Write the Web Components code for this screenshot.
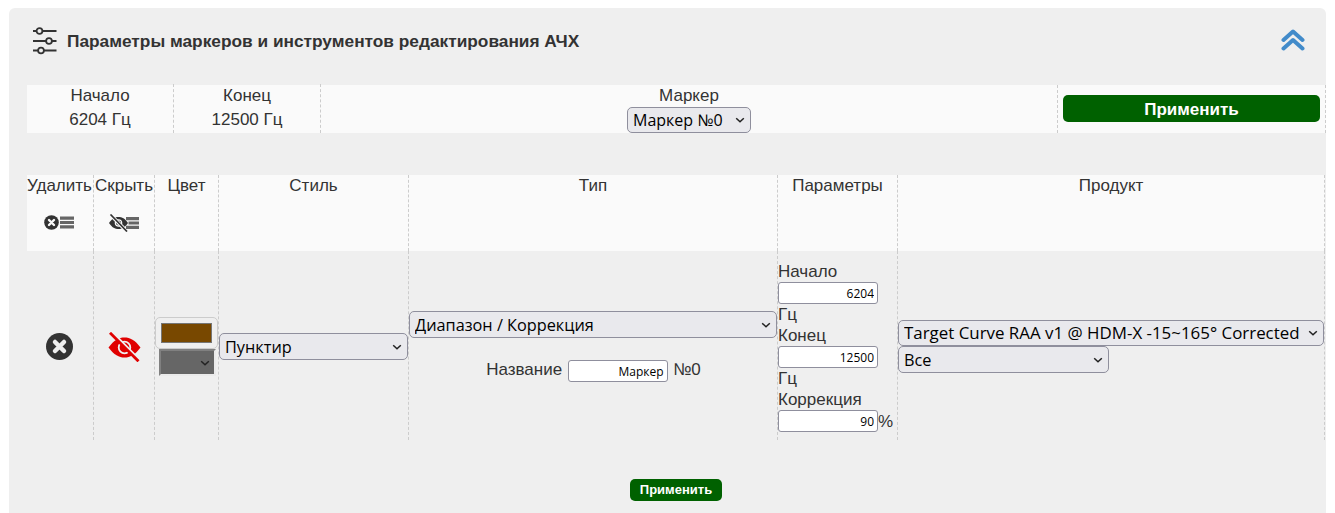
<!DOCTYPE html>
<html lang="ru"><head><meta charset="utf-8"><title>Параметры</title>
<style>
html,body{margin:0;padding:0;background:#fff;overflow:hidden;height:513px}
body{padding:8px 9px 0;font:17px/21px "Liberation Sans",Arial,sans-serif;color:#333}
</style></head><body>
<marker-panel>
  <panel-header slot="header" title="Параметры маркеров и инструментов редактирования АЧХ"></panel-header>
  <info-row></info-row>
  <marker-table></marker-table>
  <div slot="footer"><green-button small>Применить</green-button></div>
</marker-panel>
<script>
const chev="url(\"data:image/svg+xml,%3Csvg xmlns='http://www.w3.org/2000/svg' width='10' height='6' viewBox='0 0 10 6'%3E%3Cpath d='M1.200 1.200L5 4.800L8.800 1.200' fill='none' stroke='%23222' stroke-width='1.500'/%3E%3C/svg%3E\")";
const ctl=`select{appearance:none;box-sizing:border-box;background:#e9e9ed ${chev} no-repeat right 5.500px center;border:1px solid #8f8f9d;border-radius:5px;color:#000;font:16.3px "Open Sans","Noto Sans",sans-serif;margin:0;padding:0 0 0 5px;display:block}
input.num{box-sizing:border-box;width:100px;height:22px;background:#fff;border:1px solid #8f8f9d;border-radius:3px;color:#000;font:12px "Open Sans","Noto Sans",sans-serif;text-align:right;padding:0 3px;margin:0;display:block}`;
function def(n,html){customElements.define(n,class extends HTMLElement{connectedCallback(){if(this.shadowRoot)return;const r=this.attachShadow({mode:'open'});r.innerHTML=typeof html==='function'?html(this):html;}})}
def('marker-panel',`<style>:host{display:block;box-sizing:border-box;height:505px;background:#efefef;border-radius:6px 6px 0 0;padding-left:18px}
.f{display:flex;justify-content:center;margin-top:39px;padding-right:1px}</style>
<slot name="header"></slot><slot></slot><div class="f"><slot name="footer"></slot></div>`);
def('panel-header',h=>`<style>:host{display:flex;align-items:center;box-sizing:border-box;height:77px;padding:0 21px 11px 6px}
h2{margin:0 0 0 10px;font:bold 17.3px/20px "Liberation Sans",Arial,sans-serif;color:#333;flex:1}
svg{display:block}</style>
<svg width="24" height="28" viewBox="0 0 24 28" fill="none" stroke="#333" stroke-width="1.800"><path d="M0 4H3.500M9.500 4H23.500M0 14H13M19 14H23.500M0 23.500H5M11 23.500H23.500"/><circle cx="6.500" cy="4" r="2.900"/><circle cx="16" cy="14" r="2.900"/><circle cx="8" cy="23.500" r="2.900"/></svg>
<h2>${h.getAttribute('title')}</h2>
<svg width="24" height="22" viewBox="0 0 24 22" fill="none" stroke="#428bca" stroke-width="4" stroke-linecap="round" stroke-linejoin="round" style="margin-top:-2px"><path d="M2.500 11L12 2.500L21.500 11M2.500 19.500L12 11L21.500 19.500"/></svg>`);
def('green-button',h=>`<style>:host{display:block}
button{display:block;width:100%;box-sizing:border-box;border:0;background:#006100;color:#fff;border-radius:5px;font:bold 17px/27px "Liberation Sans",Arial,sans-serif;height:27px;padding:1px 0 0;margin:0}
:host([small]) button{width:92px;height:22px;font-size:13px;line-height:22px;padding:0}</style><button><slot></slot></button>`);
def('info-row',`<style>${ctl}:host{display:grid;grid-template-columns:147px 147px 737px 268px;background:#fafafa;height:48px;line-height:24px;text-align:center}
.c{border-right:1px dashed #ccc;box-sizing:border-box}
.c.t{margin-top:-1px;height:49px}
.c.m{display:flex;flex-direction:column;align-items:center;line-height:22px}
.c.b{padding:10px 5px 0 5px}
select{width:124px;height:26px;font-size:16px}</style>
<div class="c t">Начало<br>6204 Гц</div><div class="c t">Конец<br>12500 Гц</div>
<div class="c m">Маркер<select><option>Маркер №0</option></select></div>
<div class="c b"><green-button>Применить</green-button></div>`);
def('marker-table',`<style>${ctl}:host{display:grid;grid-template-columns:67px 61px 64px 190px 369px 120px 427px;grid-template-rows:76px 189px;margin-top:42px;white-space:nowrap}
.h,.d{border-right:1px dashed #ccc;box-sizing:border-box;text-align:center}
.h{background:#fafafa}
.h svg{display:block;margin:19px auto 0}
.d{display:flex;flex-direction:column;justify-content:center;align-items:center;padding-top:2px}
.d.i{padding-right:2px}
.d.s{align-items:flex-start}
.d.p{justify-content:flex-start;align-items:flex-start;padding-top:10px;text-align:left}
.p span{display:block}
.u{display:flex;align-items:center}
.nm{display:flex;align-items:center;gap:5.500px;margin-top:22px;height:22px;justify-content:center;padding-left:1px;line-height:20px}
.nm span{display:block;margin-top:-2px}
.clr{box-sizing:border-box;width:63px;height:32px;padding:5px;background:#efefef;border:1px solid #ccc;border-radius:5px;margin:0;display:block}
.clr i{display:block;width:100%;height:100%;box-sizing:border-box;background:#784800;border:1px solid #767676}
select.gr{box-sizing:border-box;width:57px;height:27px;background-color:#666;border:2px solid;border-color:#808080 #eaeaea #eaeaea #808080;border-radius:0;margin:0 0 0 4px;background-position:right 4px center}
</style>
<div class="h" style="padding-right:2px">Удалить<svg width="30" height="15" viewBox="0 0 30 15"><circle cx="7.500" cy="7.500" r="7.300" fill="#333"/><path d="M5 5l5 5M10 5l-5 5" stroke="#fafafa" stroke-width="2.400" stroke-linecap="round"/><path d="M16 1.500h14v3.200H16zM16 5.900h14v3.200H16zM16 10.300h14v3.200H16z" fill="#666"/></svg></div>
<div class="h">Скрыть<svg width="30" height="18" viewBox="0 0 30 18" style="margin-top:18px"><path d="M0 9C3 4.500 6 3 9.500 3s6.500 1.500 9.500 6c-3 4.500-6 6-9.500 6S3 13.500 0 9z" fill="#333"/><circle cx="9.500" cy="9" r="3.200" fill="none" stroke="#fafafa" stroke-width="1.200"/><path d="M0.800 1.500L17 18" stroke="#fafafa" stroke-width="3.600" transform="translate(.7 -.7)"/><path d="M1.500 0.500L18 17.500" stroke="#333" stroke-width="1.700"/><path d="M17 3h13v3.200H17zM19.500 7.400h10.500v3.200H19.500zM17 11.800h13v3.200H17z" fill="#666"/></svg></div>
<div class="h">Цвет</div><div class="h">Стиль</div><div class="h">Тип</div><div class="h">Параметры</div><div class="h">Продукт</div>

<div class="d i"><svg width="27" height="27" viewBox="0 0 27 27"><circle cx="13.500" cy="13.500" r="13.500" fill="#333"/><path d="M9 9l9 9M18 9l-9 9" stroke="#efefef" stroke-width="4.500" stroke-linecap="round"/></svg></div>
<div class="d"><svg width="33" height="30" viewBox="0 0 33 30"><path d="M0.500 15.500C6 8 11 5.500 16.500 5.500S27 8 32.500 15.500C27 23 22 25.500 16.500 25.500S6 23 0.500 15.500z" fill="#e00000"/><circle cx="16.500" cy="15.500" r="5.800" fill="none" stroke="#efefef" stroke-width="1.800"/><path d="M1.500 1.500L29 29.500" stroke="#efefef" stroke-width="2.500" transform="translate(2 -2)"/><path d="M2 0.800L30.500 29.300" stroke="#e00000" stroke-width="2.800"/></svg></div>
<div class="d s"><div class="clr"><i></i></div><select class="gr"><option></option></select></div>
<div class="d"><select style="width:189px;height:27px"><option>Пунктир</option></select></div>
<div class="d" style="align-items:stretch"><select style="width:368px;height:27px"><option>Диапазон / Коррекция</option></select><div class="nm"><span>Название</span><input class="num" value="Маркер"><span>№0</span></div></div>
<div class="d p"><span>Начало</span><input class="num" value="6204"><span>Гц</span><span>Конец</span><input class="num" value="12500"><span>Гц</span><span>Коррекция</span><div class="u"><input class="num" value="90"><span>%</span></div></div>
<div class="d s"><select style="width:426px;height:26px;font-size:16.9px;padding-bottom:2px"><option>Target Curve RAA v1 @ HDM-X -15~165° Corrected</option></select><select style="width:211px;height:27px"><option>Все</option></select></div>`);
</script>
</body></html>
